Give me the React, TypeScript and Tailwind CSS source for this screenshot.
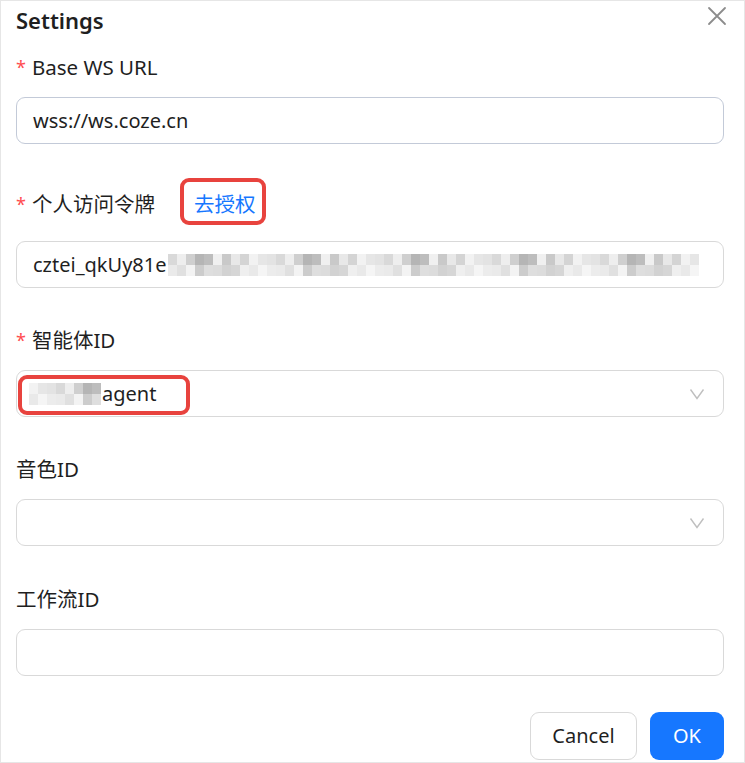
import React from 'react';

const font = { fontFamily: '"Noto Sans", "Noto Sans CJK SC", sans-serif' };

const shadesTop = [
  'bg-[#f0f0f0]', 'bg-[#d9d9d9]', 'bg-[#e8e8e8]', 'bg-[#cfcfcf]', 'bg-[#f2f2f2]', 'bg-[#bdbdbd]',
  'bg-[#e3e3e3]', 'bg-[#c9c9c9]', 'bg-[#eeeeee]', 'bg-[#d4d4d4]', 'bg-[#b5b5b5]', 'bg-[#e6e6e6]',
];
const shadesBottom = [
  'bg-[#e9e9e9]', 'bg-[#f3f3f3]', 'bg-[#d6d6d6]', 'bg-[#eaeaea]', 'bg-[#dcdcdc]', 'bg-[#f5f5f5]',
  'bg-[#cccccc]', 'bg-[#efefef]', 'bg-[#e0e0e0]', 'bg-[#d2d2d2]', 'bg-[#ececec]', 'bg-[#dedede]',
];

const Blur = ({ cols, seed }: { cols: number; seed: number }) => (
  <div className="flex flex-col">
    <div className="flex">
      {Array.from({ length: cols }).map((_, i) => (
        <div key={i} className={`w-[9px] h-[11px] ${shadesTop[(i * 7 + seed) % shadesTop.length]}`} />
      ))}
    </div>
    <div className="flex">
      {Array.from({ length: cols }).map((_, i) => (
        <div key={i} className={`w-[9px] h-[11px] ${shadesBottom[(i * 5 + seed * 3) % shadesBottom.length]}`} />
      ))}
    </div>
  </div>
);

const Star = () => <span className="text-[#ff4d4f] mr-[6px] text-[18px]">*</span>;

const Label = ({ text, required, className = '' }: { text: string; required?: boolean; className?: string }) => (
  <div className={`h-[30px] flex items-center text-[20.5px] text-[#1f1f1f] ${className}`}>
    {required && <Star />}
    <span>{text}</span>
  </div>
);

const Chevron = () => (
  <svg width="16" height="12" viewBox="0 0 16 12" className="mr-[2px]">
    <path d="M1.5 1.5 L8 10.5 L14.5 1.5" fill="none" stroke="#bfbfbf" strokeWidth="1.4" />
  </svg>
);

export default function App() {
  return (
    <div className="w-[745px] h-[763px] bg-white border border-[#e6e6e6] relative" style={font}>
      <div className="pl-[15px] pr-[20px]">
        <div className="h-[39px] flex items-center text-[22px] font-semibold text-[#1f1f1f]">Settings</div>
        <button className="absolute right-[16px] top-[4px] w-[22px] h-[22px] flex items-center justify-center">
          <svg width="20" height="20" viewBox="0 0 20 20">
            <path d="M2 2 L18 18 M18 2 L2 18" stroke="#8c8c8c" strokeWidth="1.8" strokeLinecap="round" />
          </svg>
        </button>

        <Label text="Base WS URL" required className="mt-[12px]" />
        <div className="mt-[15px] h-[47px] rounded-[9px] border border-[#c3cad8] flex items-center pl-[16px] text-[20px] text-[#1f1f1f]">
          wss://ws.coze.cn
        </div>

        <div className="mt-[45px] h-[30px] flex items-center text-[20.5px] text-[#1f1f1f] relative">
          <Star />
          <span>个人访问令牌</span>
          <span className="ml-[39px] text-[#1677ff]">去授权</span>
          <div className="absolute left-[164px] top-[-11px] w-[86px] h-[47px] border-[4px] border-[#e8433e] rounded-[9px]" />
        </div>
        <div className="mt-[22px] h-[47px] rounded-[9px] border border-[#d9d9d9] flex items-center pl-[16px] text-[20px] text-[#1f1f1f] overflow-hidden">
          <span>cztei_qkUy81e</span>
          <div className="ml-[1px]">
            <Blur cols={59} seed={1} />
          </div>
        </div>

        <Label text="智能体ID" required className="mt-[37px]" />
        <div className="mt-[15px] h-[47px] rounded-[9px] border border-[#d9d9d9] flex items-center justify-between pl-[12px] pr-[16px] text-[20px] text-[#1f1f1f] relative">
          <div className="flex items-center">
            <Blur cols={8} seed={4} />
            <span className="ml-[1px]">agent</span>
          </div>
          <Chevron />
          <div className="absolute left-[1px] top-[4px] w-[172px] h-[40px] border-[4px] border-[#e8433e] rounded-[9px]" />
        </div>

        <Label text="音色ID" className="mt-[37px]" />
        <div className="mt-[15px] h-[47px] rounded-[9px] border border-[#d9d9d9] flex items-center justify-end pr-[16px]">
          <Chevron />
        </div>

        <Label text="工作流ID" className="mt-[38px]" />
        <div className="mt-[15px] h-[47px] rounded-[9px] border border-[#d9d9d9]" />

        <div className="mt-[36px] flex justify-end gap-[13px]">
          <button className="h-[48px] w-[107px] rounded-[9px] border border-[#d9d9d9] bg-white text-[20px] text-[#1f1f1f]">
            Cancel
          </button>
          <button className="h-[48px] w-[74px] rounded-[9px] bg-[#1677ff] text-[20px] text-white">OK</button>
        </div>
      </div>
    </div>
  );
}
